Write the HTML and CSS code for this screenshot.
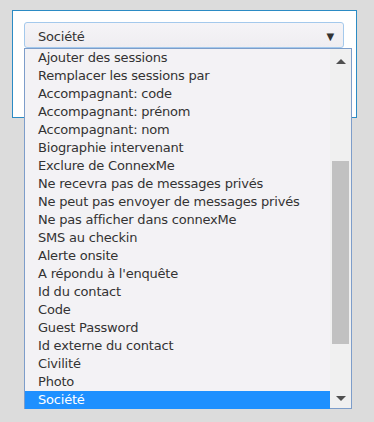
FILE: index.html
```
<!DOCTYPE html>
<html lang="fr">
<head>
    <meta charset="UTF-8">
    <meta name="viewport" content="width=device-width, initial-scale=1.0">
    <title>Champ</title>
    <link rel="stylesheet" href="styles.css">
</head>
<body>
    <div class="panel">
        <div class="select">
            <span>Société</span>
            <span class="caret">&#9660;</span>
        </div>
        <div class="listbox">
            <ul class="options">
                <li>Ajouter des sessions</li>
                <li>Remplacer les sessions par</li>
                <li>Accompagnant: code</li>
                <li>Accompagnant: prénom</li>
                <li>Accompagnant: nom</li>
                <li>Biographie intervenant</li>
                <li>Exclure de ConnexMe</li>
                <li>Ne recevra pas de messages privés</li>
                <li>Ne peut pas envoyer de messages privés</li>
                <li>Ne pas afficher dans connexMe</li>
                <li>SMS au checkin</li>
                <li>Alerte onsite</li>
                <li>A répondu à l'enquête</li>
                <li>Id du contact</li>
                <li>Code</li>
                <li>Guest Password</li>
                <li>Id externe du contact</li>
                <li>Civilité</li>
                <li>Photo</li>
                <li class="selected">Société</li>
            </ul>
            <div class="scrollbar">
                <span class="arrow up"></span>
                <div class="track"><div class="thumb"></div></div>
                <span class="arrow down"></span>
            </div>
        </div>
    </div>
</body>
</html>
```

FILE: styles.css
```
html {
    height: 100%;
    background: #dcdcdc;
}
body {
    box-sizing: border-box;
    min-height: 100%;
    margin: 0;
    padding: 10px 0 0 12px;
    background: #dcdcdc;
    font-family: "DejaVu Sans", Verdana, sans-serif;
    font-size: 13px;
    letter-spacing: -0.2px;
    color: #333;
}
.panel {
    position: relative;
    width: 321px;
    height: 84px;
    padding: 11px;
    background: #fff;
    border: 1px solid #2b8bc4;
}
.select {
    display: flex;
    justify-content: space-between;
    align-items: center;
    box-sizing: border-box;
    width: 320px;
    height: 26px;
    padding: 2px 9px 0 13px;
    background: linear-gradient(#f5f4f7, #efedf1);
    border: 1px solid #a4c9ec;
    border-radius: 3px;
}
.caret {
    font-size: 10px;
    color: #333;
}
.listbox {
    position: absolute;
    top: 37px;
    left: 11px;
    z-index: 2;
    display: flex;
    width: 326px;
    height: 359px;
    background: #f3f2f5;
    border: 1px solid #7d9dca;
}
.options {
    list-style: none;
    margin: 0;
    padding: 0;
    width: 305px;
}
.options li {
    height: 18px;
    line-height: 18px;
    padding-left: 13px;
    white-space: nowrap;
}
.options li.selected {
    background: #1e90ff;
    color: #fff;
}
.scrollbar {
    display: flex;
    flex-direction: column;
    align-items: center;
    width: 21px;
    background: #f0f0f0;
}
.arrow {
    width: 0;
    height: 0;
    border-left: 5px solid transparent;
    border-right: 5px solid transparent;
}
.arrow.up {
    margin-top: 10px;
    border-bottom: 5px solid #505050;
}
.arrow.down {
    margin-bottom: 7px;
    border-top: 5px solid #505050;
}
.track {
    flex: 1;
    width: 17px;
}
.thumb {
    width: 17px;
    height: 183px;
    margin-top: 97px;
    background: #c1c1c1;
}
```
